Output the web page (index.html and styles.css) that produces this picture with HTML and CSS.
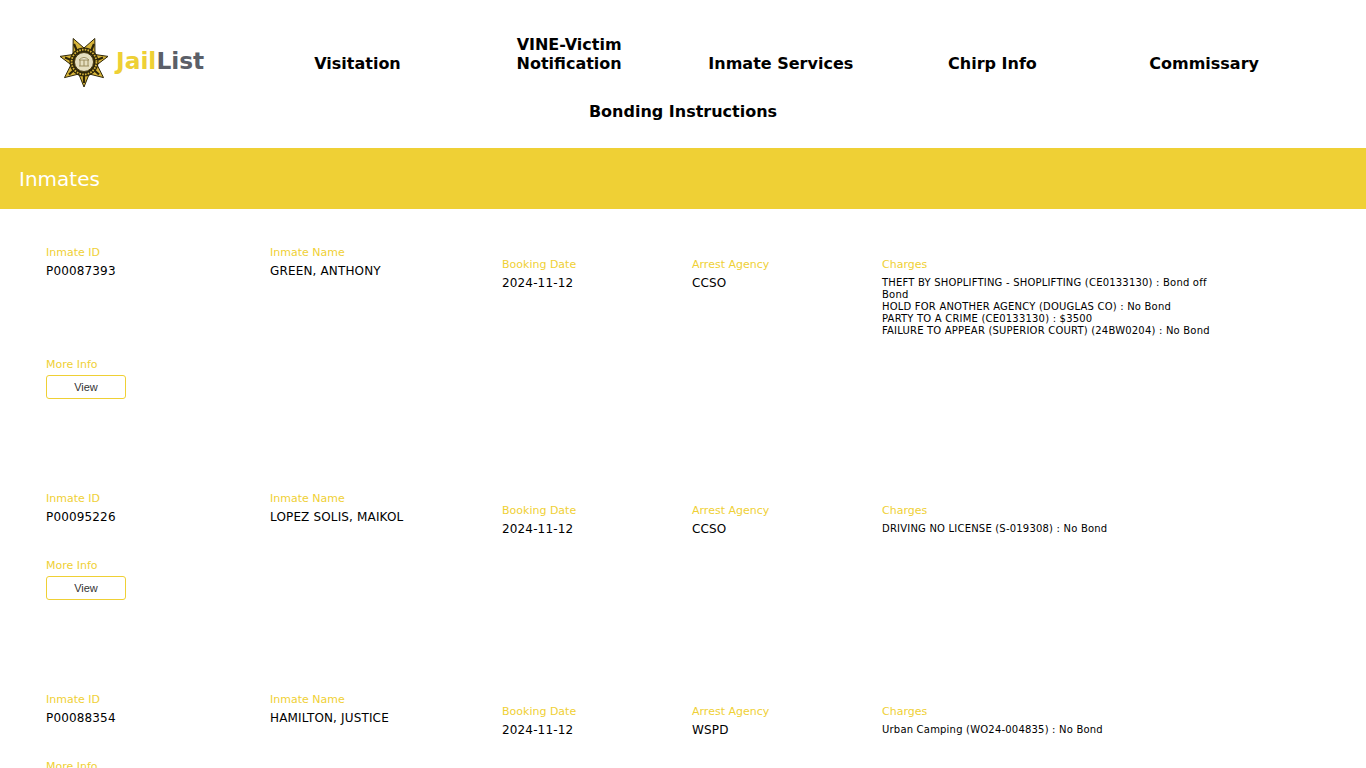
FILE: index.html
```html
<!DOCTYPE html>
<html lang="en">
<head>
  <meta charset="UTF-8" />
  <meta name="viewport" content="width=device-width, initial-scale=1.0" />
  <title>JailList | Inmates</title>
  <link rel="stylesheet" href="styles.css">
</head>
<body>
  <header class="site-header">
    <nav class="nav-row">
      <a class="nav-item logo" href="#">
        <svg class="badge" width="48" height="50" viewBox="-24 -25 48 50">
          <polygon points="0,25 5.2,12 19.5,15.6 13,2.7 24,-5.6 11,-7.5 10.8,-23.5 0,-14 -10.8,-23.5 -11,-7.5 -24,-5.6 -13,2.7 -19.5,15.6 -5.2,12" fill="#d8b53a" stroke="#2e2608" stroke-width="1"/>
          <path d="M0 21 V14 M15 12.5 L10 8 M-15 12.5 L-10 8 M19 -4.5 L13 -2 M-19 -4.5 L-13 -2 M10 -18 L7 -11 M-10 -18 L-7 -11" stroke="#2e2608" stroke-width="2.2"/>
          <circle r="14.5" fill="#2e2608"/>
          <circle r="12.4" fill="none" stroke="#d8b53a" stroke-width="1.8" stroke-dasharray="1.6 1.2"/>
          <circle r="9.5" fill="#e6dfc0"/>
          <circle r="9.5" fill="none" stroke="#4a3c10" stroke-width="1"/>
          <path d="M-5 4 H5 M-4 4 V-2 M0 4 V-2 M4 4 V-2 M-5 -2 Q0 -7 5 -2 Z" fill="#f5f1e0" stroke="#9a8c5c" stroke-width="1"/>
        </svg>
        <span class="wordmark"><span class="jail">Jail</span><span class="list">List</span></span>
      </a>
      <a class="nav-item" href="#">Visitation</a>
      <a class="nav-item" href="#">VINE-Victim Notification</a>
      <a class="nav-item" href="#">Inmate Services</a>
      <a class="nav-item" href="#">Chirp Info</a>
      <a class="nav-item" href="#">Commissary</a>
    </nav>
    <nav class="nav-row nav-row-second">
      <a class="nav-item" href="#">Bonding Instructions</a>
    </nav>
  </header>

  <div class="title-band">Inmates</div>

  <main class="inmates">
    <section class="inmate">
      <div class="cell"><label>Inmate ID</label><div class="value">P00087393</div></div>
      <div class="cell"><label>Inmate Name</label><div class="value">GREEN, ANTHONY</div></div>
      <div class="cell low"><label>Booking Date</label><div class="value">2024-11-12</div></div>
      <div class="cell low"><label>Arrest Agency</label><div class="value">CCSO</div></div>
      <div class="cell low"><label>Charges</label>
        <div class="charges">
          THEFT BY SHOPLIFTING - SHOPLIFTING (CE0133130) : Bond off Bond<br>
          HOLD FOR ANOTHER AGENCY (DOUGLAS CO) : No Bond<br>
          PARTY TO A CRIME (CE0133130) : $3500<br>
          FAILURE TO APPEAR (SUPERIOR COURT) (24BW0204) : No Bond
        </div>
      </div>
      <div class="cell more"><label>More Info</label><button class="view-btn">View</button></div>
    </section>

    <section class="inmate">
      <div class="cell"><label>Inmate ID</label><div class="value">P00095226</div></div>
      <div class="cell"><label>Inmate Name</label><div class="value">LOPEZ SOLIS, MAIKOL</div></div>
      <div class="cell low"><label>Booking Date</label><div class="value">2024-11-12</div></div>
      <div class="cell low"><label>Arrest Agency</label><div class="value">CCSO</div></div>
      <div class="cell low"><label>Charges</label>
        <div class="charges">DRIVING NO LICENSE (S-019308) : No Bond</div>
      </div>
      <div class="cell more"><label>More Info</label><button class="view-btn">View</button></div>
    </section>

    <section class="inmate">
      <div class="cell"><label>Inmate ID</label><div class="value">P00088354</div></div>
      <div class="cell"><label>Inmate Name</label><div class="value">HAMILTON, JUSTICE</div></div>
      <div class="cell low"><label>Booking Date</label><div class="value">2024-11-12</div></div>
      <div class="cell low"><label>Arrest Agency</label><div class="value">WSPD</div></div>
      <div class="cell low"><label>Charges</label>
        <div class="charges">Urban Camping (WO24-004835) : No Bond</div>
      </div>
      <div class="cell more"><label>More Info</label><button class="view-btn">View</button></div>
    </section>
  </main>
</body>
</html>
```

FILE: styles.css
```css
* {
  box-sizing: border-box;
  margin: 0;
  padding: 0;
}

body {
  background: #fff;
  color: #000;
  font-family: 'DejaVu Sans', Verdana, sans-serif;
}

.site-header {
  height: 148px;
  padding-top: 13px;
}

.nav-row {
  display: flex;
  align-items: flex-start;
  padding-left: 40px;
}

.nav-row-second {
  justify-content: center;
  padding-left: 0;
}

.nav-item {
  width: 211.66px;
  height: 60px;
  padding: 0 10px;
  display: flex;
  align-items: flex-end;
  justify-content: center;
  text-align: center;
  color: #000;
  font-size: 16px;
  font-weight: bold;
  line-height: 19px;
  text-decoration: none;
}

.nav-row-second .nav-item {
  height: 34px;
}

.logo {
  height: 50px;
  margin-top: 24px;
  padding: 0 0 0 20px;
  align-items: center;
  justify-content: flex-start;
  gap: 8px;
}

.badge {
  flex: none;
}

.wordmark {
  font-size: 23.3px;
  line-height: 26px;
  margin-top: -2px;
}

.jail {
  color: #eed035;
}

.list {
  color: #5b5f68;
}

.title-band {
  height: 61px;
  padding-left: 19px;
  background: #efd035;
  color: #fff;
  font-size: 20px;
  line-height: 63px;
}

.inmates {
  padding: 37px 0 0 46px;
}

.inmate {
  display: grid;
  grid-template-columns: 224px 232px 190px 190px 340px;
  margin-bottom: 93px;
}

.cell label {
  display: block;
  color: #efd035;
  font-size: 11px;
  line-height: 13px;
  margin-bottom: 4px;
}

.low {
  min-height: 67px;
  padding-top: 12px;
}

.value {
  font-size: 12px;
  line-height: 16px;
  letter-spacing: 0.15px;
}

.charges {
  font-size: 10px;
  line-height: 12px;
  letter-spacing: 0.2px;
  margin-top: 6px;
  padding-bottom: 21px;
}

.more {
  grid-column: 1 / -1;
}

.view-btn {
  display: block;
  width: 80px;
  height: 24px;
  background: #fff;
  border: 1px solid #efd035;
  border-radius: 3px;
  color: #333;
  font-family: 'Liberation Sans', Arial, sans-serif;
  font-size: 11px;
}
```
